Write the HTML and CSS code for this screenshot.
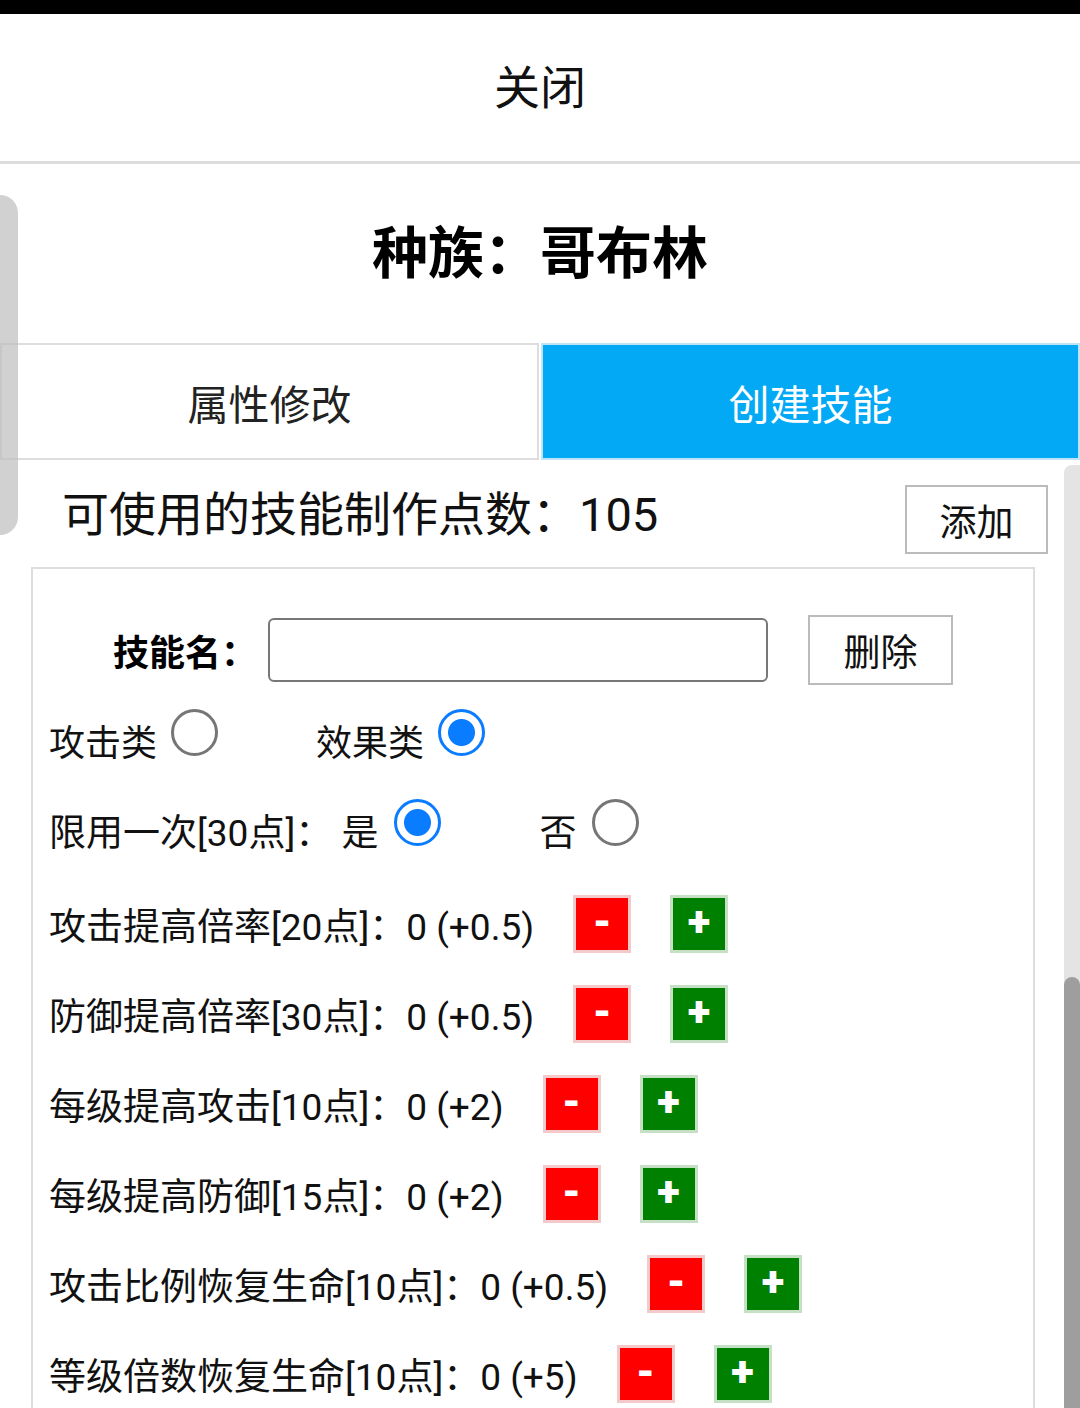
FILE: index.html
```html
<!DOCTYPE html>
<html lang="zh-CN">
<head>
    <meta charset="UTF-8">
    <meta name="viewport" content="width=device-width, initial-scale=1.0">
    <title>创建技能</title>
    <link rel="stylesheet" href="styles.css">
</head>
<body>
    <div class="status-bar"></div>
    <div class="close-bar">关闭</div>

    <div class="title">种族：哥布林</div>

    <div class="tabs">
        <div class="tab">属性修改</div>
        <div class="tab active">创建技能</div>
    </div>

    <div class="points-row">
        <div class="points">可使用的技能制作点数：105</div>
        <button class="plain-btn">添加</button>
    </div>

    <div class="skill-box">
        <div class="row name-row">
            <span class="name-label">技能名：</span>
            <input class="name-input" type="text">
            <button class="plain-btn">删除</button>
        </div>
        <div class="row kind-row">
            <span>攻击类</span>
            <input class="radio" type="radio" name="kind">
            <span class="spacer"></span>
            <span>效果类</span>
            <input class="radio" type="radio" name="kind" checked>
        </div>
        <div class="row limit-row">
            <span>限用一次[30点]：&nbsp;是</span>
            <input class="radio" type="radio" name="once" checked>
            <span class="spacer"></span>
            <span>否</span>
            <input class="radio" type="radio" name="once">
        </div>
        <div class="row">
            <span>攻击提高倍率[20点]：0 (+0.5)</span>
            <button class="step minus">-</button>
            <button class="step plus">+</button>
        </div>
        <div class="row">
            <span>防御提高倍率[30点]：0 (+0.5)</span>
            <button class="step minus">-</button>
            <button class="step plus">+</button>
        </div>
        <div class="row">
            <span>每级提高攻击[10点]：0 (+2)</span>
            <button class="step minus">-</button>
            <button class="step plus">+</button>
        </div>
        <div class="row">
            <span>每级提高防御[15点]：0 (+2)</span>
            <button class="step minus">-</button>
            <button class="step plus">+</button>
        </div>
        <div class="row">
            <span>攻击比例恢复生命[10点]：0 (+0.5)</span>
            <button class="step minus">-</button>
            <button class="step plus">+</button>
        </div>
        <div class="row">
            <span>等级倍数恢复生命[10点]：0 (+5)</span>
            <button class="step minus">-</button>
            <button class="step plus">+</button>
        </div>
    </div>

    <div class="edge-handle"></div>
    <div class="scroll-track"><div class="scroll-thumb"></div></div>
</body>
</html>
```

FILE: styles.css
```css
body {
    margin: 0;
    width: 1080px;
    height: 1408px;
    overflow: hidden;
    background: #fff;
    color: #111;
    font-family: Roboto, "Noto Sans CJK SC", sans-serif;
    position: relative;
}
.status-bar {
    height: 14px;
    background: #000;
}
.close-bar {
    height: 139px;
    padding-bottom: 8px;
    display: flex;
    align-items: center;
    justify-content: center;
    font-size: 46px;
    border-bottom: 3px solid #ddd;
}
.title {
    height: 169px;
    padding-bottom: 10px;
    display: flex;
    align-items: center;
    justify-content: center;
    font-size: 56px;
    font-weight: bold;
    color: #000;
}
.tabs {
    display: flex;
    gap: 2px;
    height: 117px;
}
.tab {
    flex: 1;
    display: flex;
    align-items: center;
    justify-content: center;
    font-size: 41px;
    border: 2px solid #ddd;
    color: #222;
}
.tab.active {
    background: #03a9f4;
    border-color: #bfe3f7;
    color: #fff;
}
.points-row {
    height: 107px;
    display: flex;
    align-items: center;
    justify-content: space-between;
    padding: 0 32px 0 62px;
}
.points {
    font-size: 47px;
    margin-bottom: 6px;
}
.plain-btn {
    width: 143px;
    height: 69px;
    background: #fff;
    border: 2px solid #bbb;
    font-family: Roboto, "Noto Sans CJK SC", sans-serif;
    font-size: 37px;
    color: #111;
    padding: 0;
    margin-top: 12px;
}
.skill-box {
    margin: 0 45px 0 31px;
    border: 2px solid #ddd;
    padding: 36px 0 0 16px;
    height: 900px;
    font-size: 37px;
}
.row {
    height: 90px;
    display: flex;
    align-items: center;
    white-space: nowrap;
}
.kind-row {
    font-size: 36px;
}
.limit-row {
    margin-bottom: 4px;
}
.name-label {
    font-size: 36px;
    font-weight: bold;
    margin-left: 64px;
    margin-right: 11px;
    color: #000;
}
.name-input {
    width: 500px;
    height: 64px;
    box-sizing: border-box;
    border: 2px solid #777;
    border-radius: 6px;
    margin: 0 40px 0 0;
}
.name-row .plain-btn {
    width: 145px;
    height: 70px;
    margin-top: 0;
}
.radio {
    appearance: none;
    width: 47px;
    height: 47px;
    box-sizing: border-box;
    margin: 0 0 16px 16px;
    border: 3px solid #767676;
    border-radius: 50%;
    background: #fff;
}
.kind-row .radio {
    margin-left: 14px;
}
.radio:checked {
    border-color: #0a7cff;
    background: radial-gradient(circle, #0a7cff 0 13px, #fff 14px);
}
.spacer {
    width: 98px;
}
.step {
    width: 58px;
    height: 58px;
    margin-left: 39px;
    padding: 0 0 4px;
    border: 3px solid rgba(255, 255, 255, 0.8);
    background-clip: border-box;
    color: #fff;
    font-family: Roboto, sans-serif;
    font-size: 42px;
    font-weight: 900;
    line-height: 1;
}
.minus {
    background-color: #ff0000;
    border-color: #f4c9c9;
}
.plus {
    background-color: #008000;
    border-color: #c6e0c6;
}
.edge-handle {
    position: absolute;
    left: 0;
    top: 195px;
    width: 18px;
    height: 340px;
    background: rgba(190, 190, 190, 0.7);
    border-radius: 0 18px 18px 0;
}
.scroll-track {
    position: absolute;
    right: 0;
    top: 465px;
    width: 16px;
    bottom: 0;
    background: #e4e4e4;
    border-radius: 8px 0 0 0;
}
.scroll-thumb {
    position: absolute;
    left: 0;
    right: 0;
    top: 512px;
    bottom: 0;
    background: #9e9e9e;
    border-radius: 8px 8px 0 0;
}
```
